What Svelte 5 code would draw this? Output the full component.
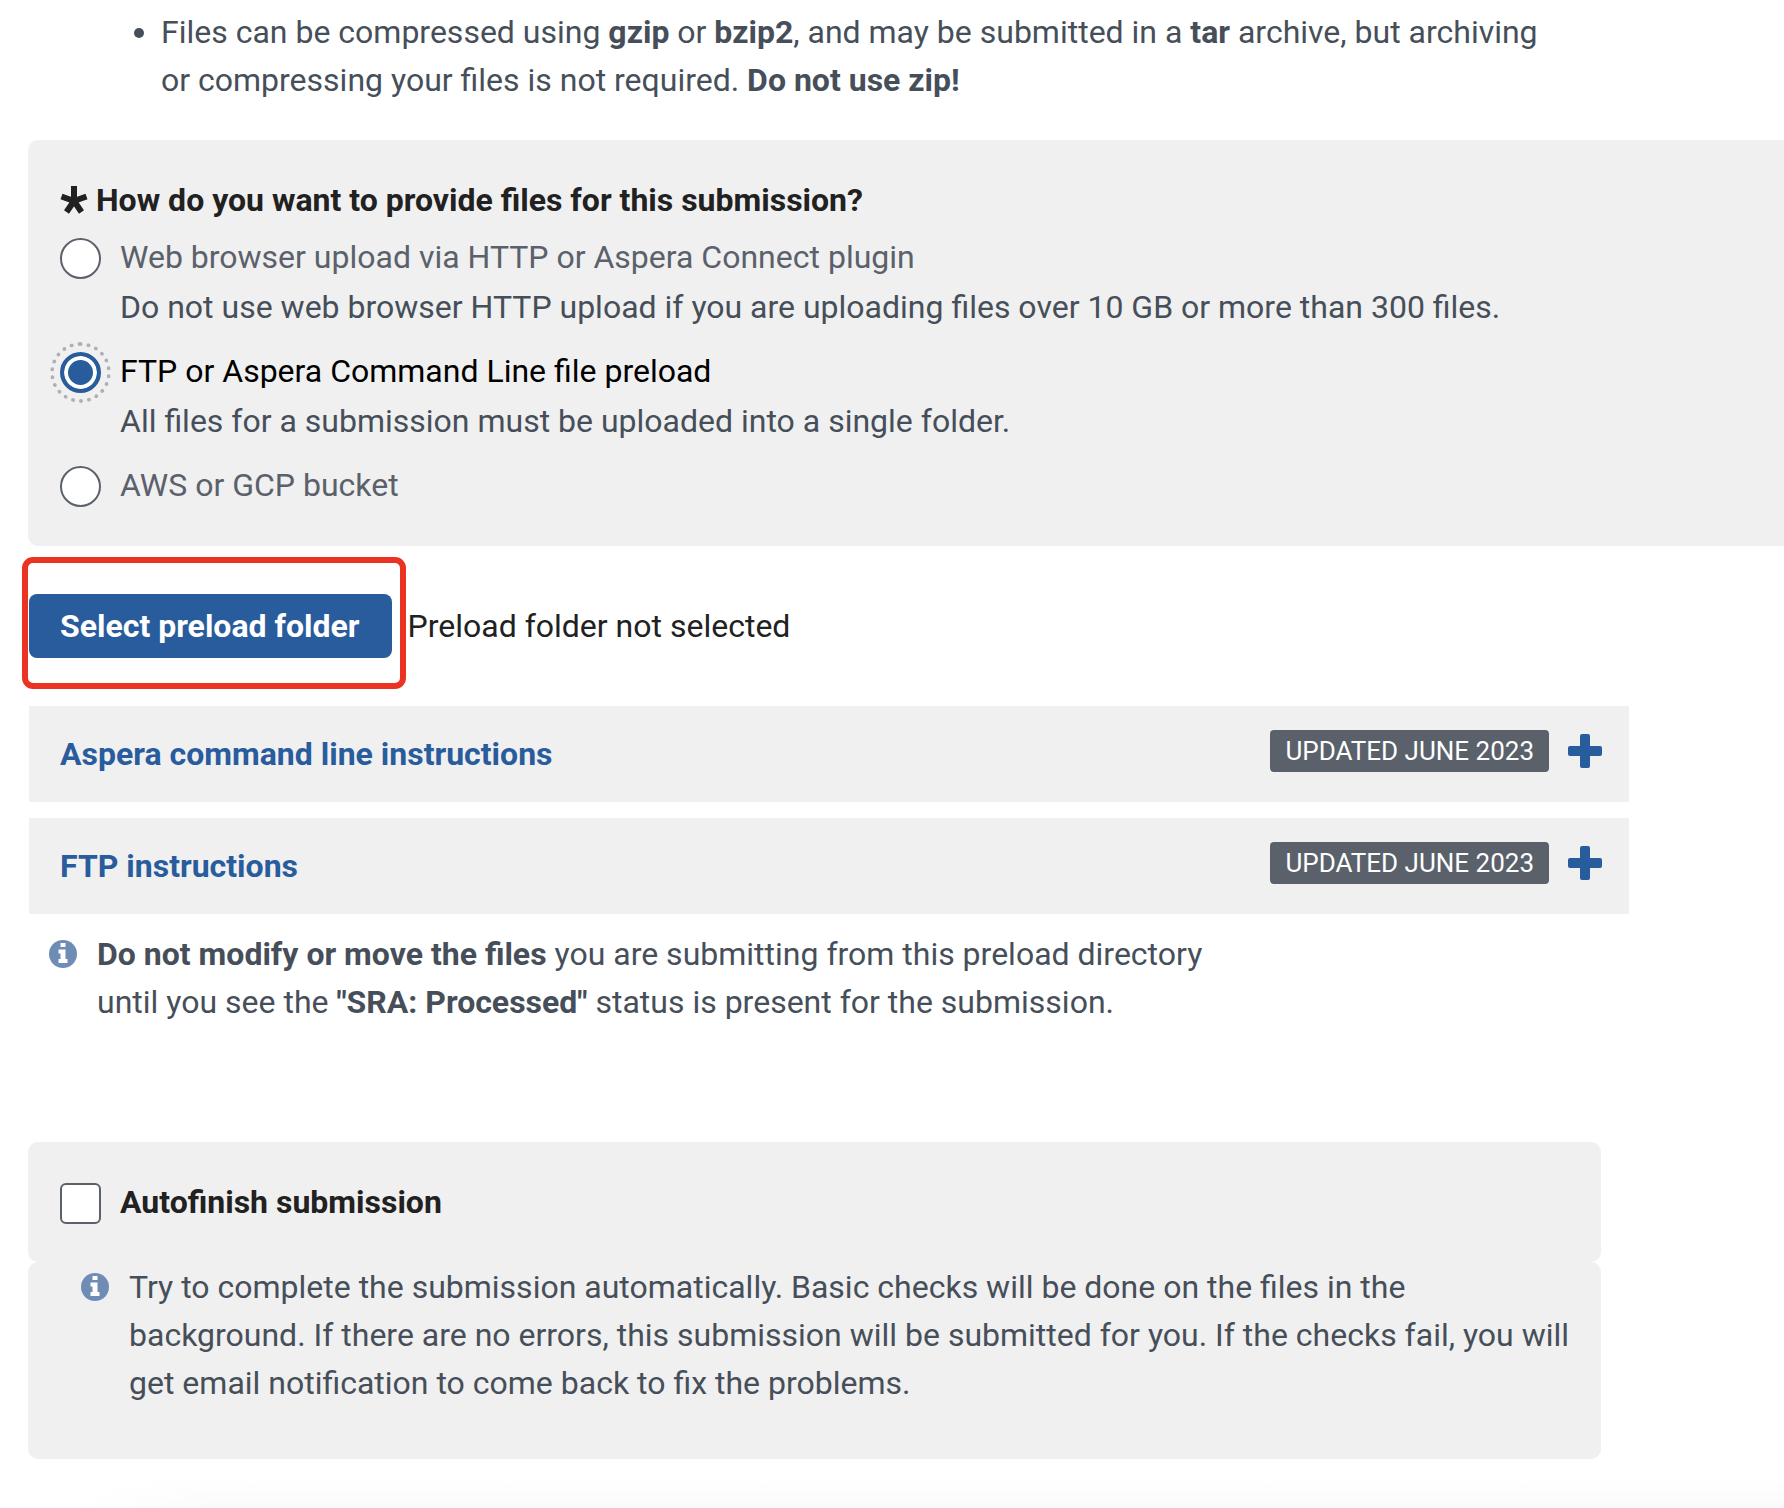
<script>
  const methods = [
    { id: 'web', label: 'Web browser upload via HTTP or Aspera Connect plugin', note: 'Do not use web browser HTTP upload if you are uploading files over 10 GB or more than 300 files.' },
    { id: 'ftp', label: 'FTP or Aspera Command Line file preload', note: 'All files for a submission must be uploaded into a single folder.' },
    { id: 'bucket', label: 'AWS or GCP bucket', note: '' }
  ];
  const guides = ['Aspera command line instructions', 'FTP instructions'];
  let method = $state('ftp');
  let autofinish = $state(false);
</script>

{#snippet infoIcon()}
  <svg class="info-icon" viewBox="0 0 28 28" aria-hidden="true">
    <circle cx="14" cy="14" r="14" fill="#6f8db4" />
    <path fill="#fff" d="M11.5 3h5v4h-5zM9.5 9.500h7v9.500h2v4h-9v-4h2v-5.500h-2z" />
  </svg>
{/snippet}

<main>
  <ul class="tips">
    <li>
      Files can be compressed using <b>gzip</b> or <b>bzip2</b>, and may be submitted in a <b>tar</b> archive, but archiving or compressing your files is not required. <b>Do not use zip!</b>
    </li>
  </ul>

  <fieldset class="methods" aria-labelledby="methods-title">
    <div class="question" id="methods-title">
      <svg viewBox="0 0 28 28" aria-hidden="true">
        <path fill="none" stroke="#212121" stroke-width="6" d="M14 0v15M14 15L1.500 10.500M14 15l12.500-4.500M14 15L6.500 26M14 15l7.500 11" />
      </svg>
      How do you want to provide files for this submission?
    </div>
    {#each methods as m (m.id)}
      <div class="method">
        <label class="choice" class:selected={method === m.id}>
          <input type="radio" name="method" value={m.id} bind:group={method} />
          <span>{m.label}</span>
        </label>
        {#if m.note}<p class="note">{m.note}</p>{/if}
      </div>
    {/each}
  </fieldset>

  <div class="preload">
    <div class="target">
      <button type="button" class="primary">Select preload folder</button>
    </div>
    <span>Preload folder not selected</span>
  </div>

  <div class="guides">
    {#each guides as title}
      <button type="button" class="guide" aria-expanded="false">
        <span class="title">{title}</span>
        <span class="badge">UPDATED JUNE 2023</span>
        <svg class="plus" viewBox="0 0 34 34" aria-hidden="true">
          <path fill="#285c9c" d="M14 0h6a2 2 0 0 1 2 2v10h10a2 2 0 0 1 2 2v6a2 2 0 0 1-2 2H22v10a2 2 0 0 1-2 2h-6a2 2 0 0 1-2-2V22H2a2 2 0 0 1-2-2v-6a2 2 0 0 1 2-2h10V2a2 2 0 0 1 2-2z" />
        </svg>
      </button>
    {/each}
  </div>

  <div class="info warning">
    {@render infoIcon()}
    <p><b>Do not modify or move the files</b> you are submitting from this preload directory until you see the <b>"SRA: Processed"</b> status is present for the submission.</p>
  </div>

  <section class="autofinish">
    <div class="panel">
      <label class="choice check">
        <input type="checkbox" bind:checked={autofinish} />
        <span>Autofinish submission</span>
      </label>
    </div>
    <div class="panel info">
      {@render infoIcon()}
      <p>Try to complete the submission automatically. Basic checks will be done on the files in the background. If there are no errors, this submission will be submitted for you. If the checks fail, you will get email notification to come back to fix the problems.</p>
    </div>
  </section>

  <div class="edge"></div>
</main>

<style>
  :global(body) {
    background: #fff;
  }
  main {
    font: 400 32px/48px Roboto, "Liberation Sans", sans-serif;
    color: #464f59;
    padding: 8px 0 0 28px;
  }
  p {
    margin: 0;
  }
  b {
    font-weight: 700;
  }
  .tips {
    margin: 0 0 36px;
    padding: 0 0 0 133px;
    max-width: 1400px;
    list-style: none;
  }
  li::before {
    content: "";
    float: left;
    width: 10px;
    height: 10px;
    margin: 20px 0 0 -27px;
    border-radius: 50%;
    background: #464f59;
  }
  .methods {
    margin: 0;
    border: 0;
    min-width: 0;
    padding: 36px 0 35px 32px;
    border-radius: 10px 0 0 10px;
    background: #f0f0f0;
  }
  .question {
    display: flex;
    align-items: center;
    gap: 8px;
    margin-bottom: 9px;
    font-weight: 700;
    color: #212121;
  }
  .question svg {
    flex: none;
    width: 28px;
    height: 28px;
  }
  .method + .method {
    margin-top: 16px;
  }
  .choice {
    display: flex;
    gap: 19px;
    height: 50px;
    color: #5b616b;
  }
  .choice.selected {
    color: #000;
  }
  .choice input {
    appearance: none;
    flex: none;
    box-sizing: border-box;
    width: 41px;
    height: 41px;
    margin: 5px 0 0;
    border: 2px solid #5b616b;
    background: #fff;
  }
  .choice input[type="radio"] {
    border-radius: 50%;
  }
  .choice input[type="radio"]:checked {
    border: 4px solid #285c9c;
    background: #285c9c;
    box-shadow: inset 0 0 0 4px #fff;
    outline: 4px dotted #aeb0b5;
    outline-offset: 6px;
  }
  .choice input[type="checkbox"] {
    border-radius: 6px;
  }
  .choice input[type="checkbox"]:checked {
    background: #285c9c;
  }
  .note {
    padding-left: 60px;
  }
  .preload {
    display: flex;
    align-items: baseline;
    gap: 2px;
    margin: 11px 0 17px -6px;
    color: #212121;
  }
  .target {
    border: 6px solid #eb3323;
    border-radius: 11px;
    padding: 31px 8px 25px 1px;
  }
  button {
    font: inherit;
    border: 0;
    text-align: left;
    cursor: pointer;
  }
  .primary {
    display: block;
    padding: 8px 32px 8px 31px;
    border-radius: 8px;
    background: #285c9c;
    color: #fff;
    font-weight: 700;
  }
  .guides {
    display: flex;
    flex-direction: column;
    gap: 16px;
    max-width: 1600px;
    margin: 0 0 16px 1px;
  }
  .guide {
    display: flex;
    align-items: flex-start;
    padding: 24px 27px 24px 31px;
    background: #f0f0f0;
  }
  .title {
    flex: 1;
    color: #285c9c;
    font-weight: 700;
  }
  .badge {
    padding: 0 15px;
    border-radius: 4px;
    background: #5b616b;
    color: #fff;
    font-size: 26px;
    line-height: 42px;
  }
  .plus {
    width: 34px;
    height: 34px;
    margin: 4px 0 0 19px;
  }
  .info {
    display: flex;
    align-items: flex-start;
    gap: 20px;
  }
  .info-icon {
    flex: none;
    width: 28px;
    height: 28px;
    margin-top: 10px;
  }
  .warning {
    max-width: 1180px;
    padding-left: 21px;
  }
  .autofinish {
    max-width: 1573px;
    margin: 116px 0 22px;
  }
  .panel {
    border-radius: 10px;
    background: #f0f0f0;
    padding: 36px 32px 34px;
  }
  .panel.info {
    padding: 1px 24px 52px 53px;
  }
  .check {
    color: #212121;
    font-weight: 700;
  }
  .edge {
    height: 28px;
    margin-left: 52px;
    background: linear-gradient(90deg, #fff, transparent 140px), linear-gradient(#fff, #fafafa);
  }
</style>
